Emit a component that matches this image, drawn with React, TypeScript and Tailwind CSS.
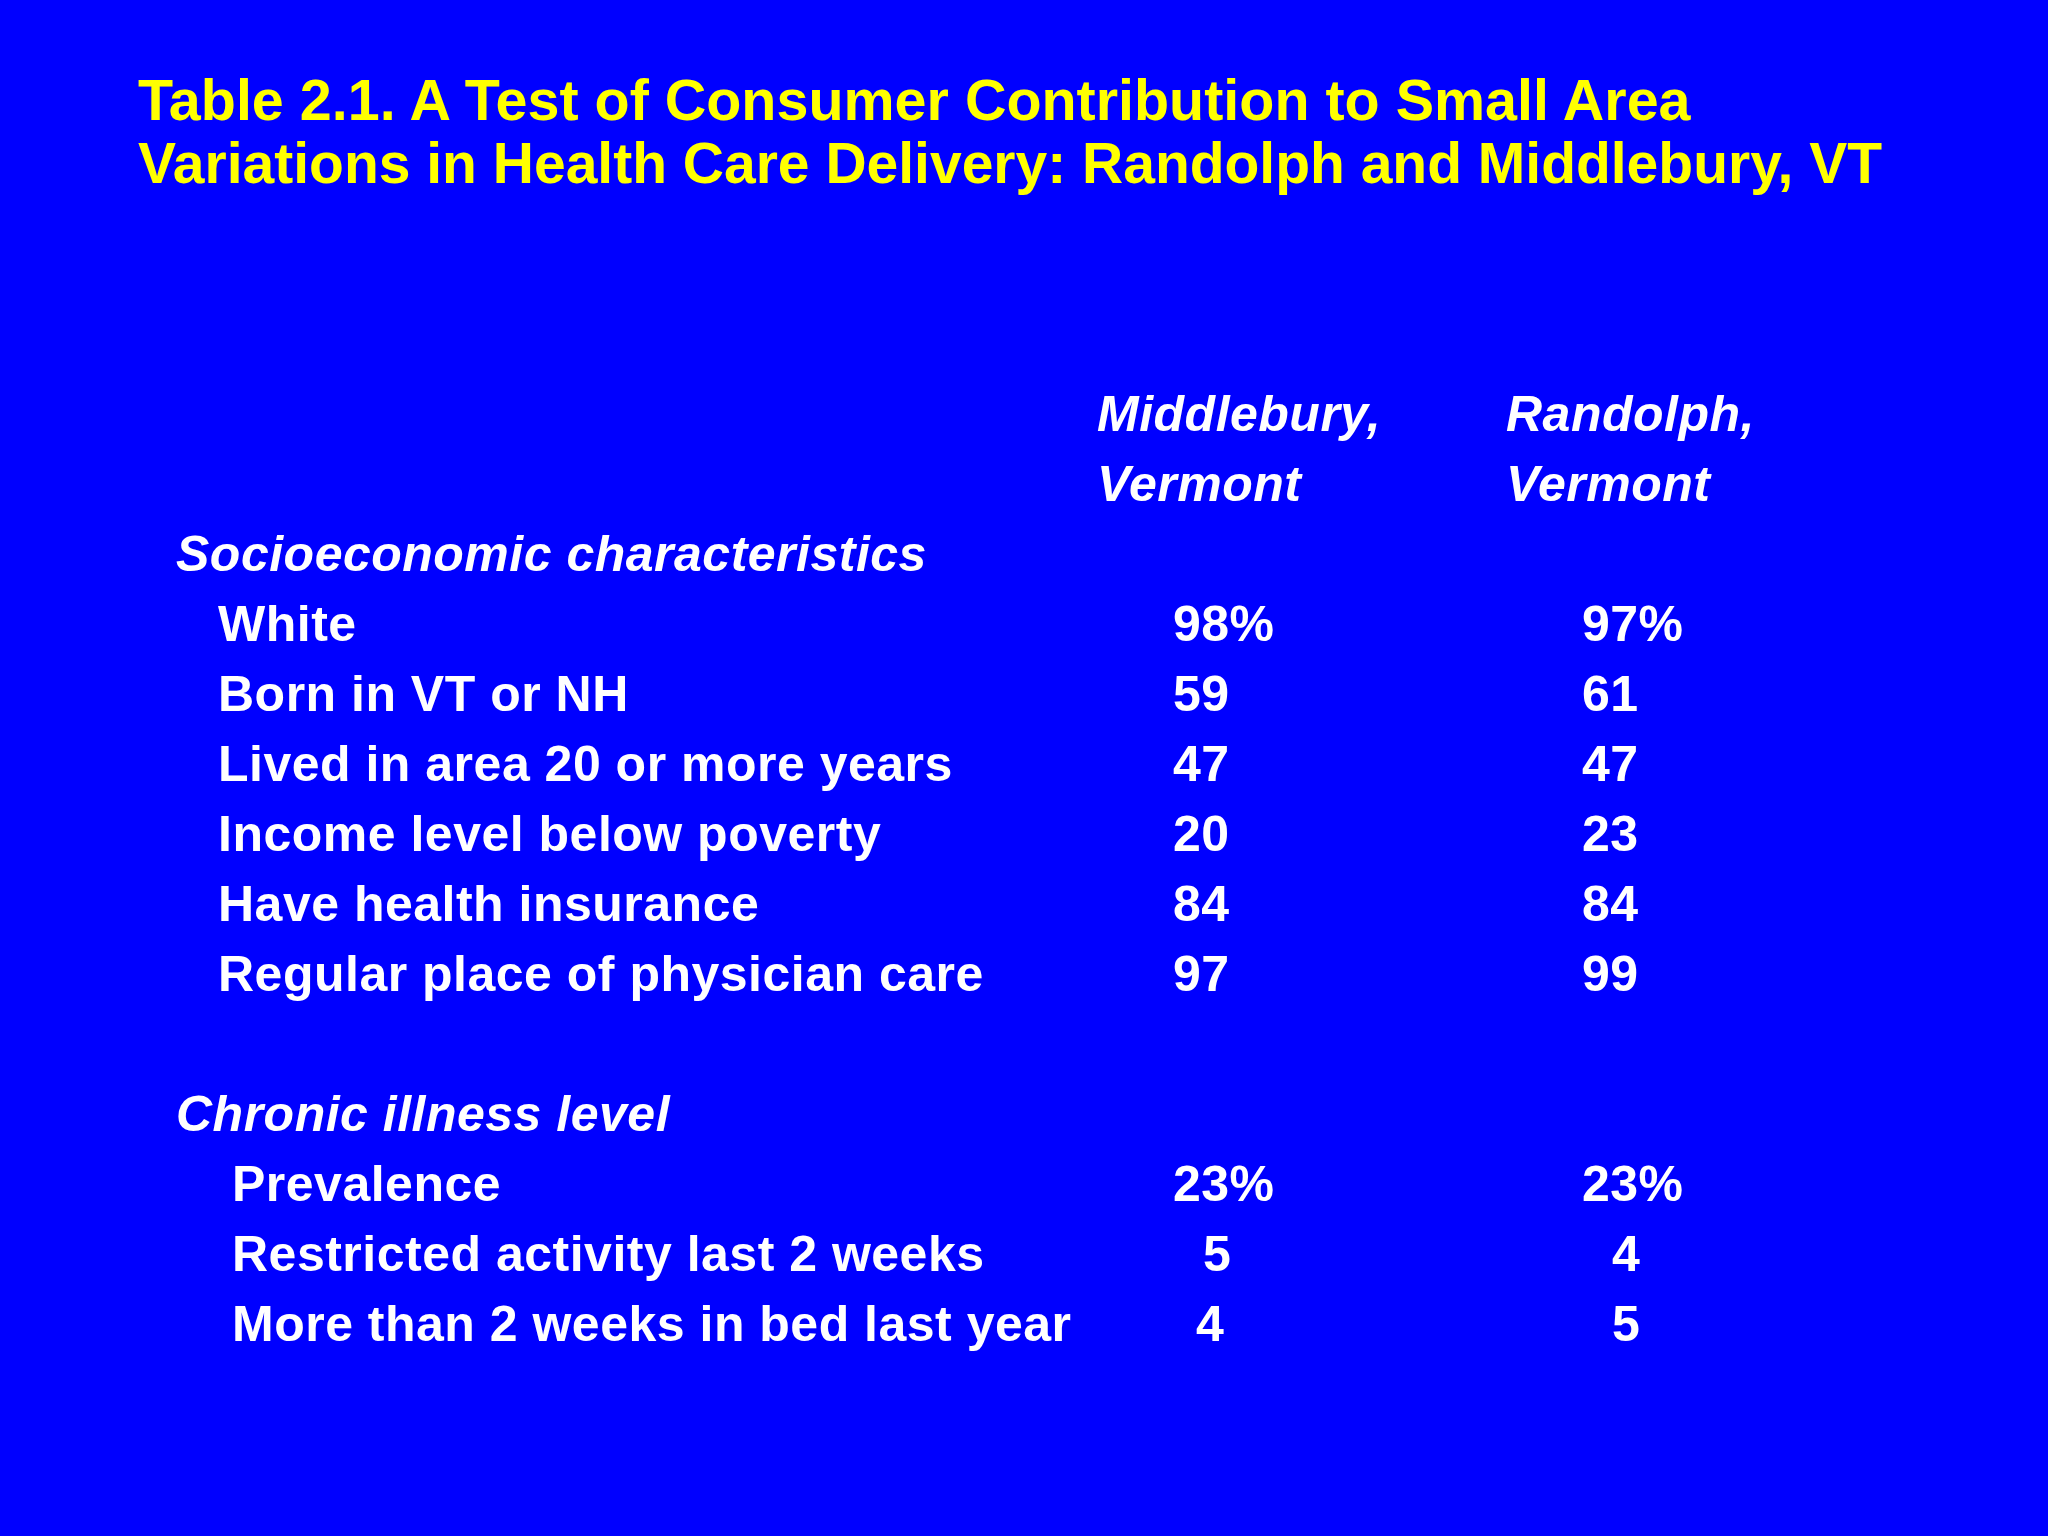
import React from "react";

type Row = {
  label: string;
  indent?: "sm" | "lg";
  italic?: boolean;
  a?: string;
  b?: string;
  aPad?: string;
  bPad?: string;
};

const rows: Row[] = [
  { label: "Socioeconomic characteristics", italic: true },
  { label: "White", indent: "sm", a: "98%", b: "97%" },
  { label: "Born in VT or NH", indent: "sm", a: "59", b: "61" },
  { label: "Lived in area 20 or more years", indent: "sm", a: "47", b: "47" },
  { label: "Income level below poverty", indent: "sm", a: "20", b: "23" },
  { label: "Have health insurance", indent: "sm", a: "84", b: "84" },
  { label: "Regular place of physician care", indent: "sm", a: "97", b: "99" },
  { label: "" },
  { label: "Chronic illness level", italic: true },
  { label: "Prevalence", indent: "lg", a: "23%", b: "23%" },
  {
    label: "Restricted activity last 2 weeks",
    indent: "lg",
    a: "5",
    b: "4",
    aPad: "pl-[106px]",
    bPad: "pl-[106px]",
  },
  {
    label: "More than 2 weeks in bed last year",
    indent: "lg",
    a: "4",
    b: "5",
    aPad: "pl-[99px]",
    bPad: "pl-[106px]",
  },
];

const App = () => {
  return (
    <div
      className="w-[2048px] h-[1536px] bg-[#0000ff] overflow-hidden"
      style={{ fontFamily: '"Liberation Sans", Arial, sans-serif' }}
    >
      <h1 className="pl-[138px] pt-[69px] text-[57px] leading-[63px] font-bold text-[#ffff00]">
        <span className="inline-block origin-left scale-x-[1.008]">
          Table 2.1. A Test of Consumer Contribution to Small Area
        </span>
        <br />
        Variations in Health Care Delivery: Randolph and Middlebury, VT
      </h1>

      <div className="mt-[184px] pl-[176px] text-white font-bold text-[50px] leading-[70px] tracking-[0.5px] whitespace-nowrap">
        <div className="grid grid-cols-[921px_409px_1fr] italic">
          <div />
          <div>Middlebury,</div>
          <div>Randolph,</div>
          <div />
          <div>Vermont</div>
          <div>Vermont</div>
        </div>
        {rows.map((r, i) => (
          <div key={i} className="grid grid-cols-[921px_409px_1fr] h-[70px]">
            <div
              className={`${r.italic ? "italic" : ""} ${
                r.indent === "sm" ? "pl-[42px]" : r.indent === "lg" ? "pl-[56px]" : ""
              }`}
            >
              {r.label}
            </div>
            <div className={r.aPad ?? "pl-[76px]"}>{r.a}</div>
            <div className={r.bPad ?? "pl-[76px]"}>{r.b}</div>
          </div>
        ))}
      </div>
    </div>
  );
};

export default App;
